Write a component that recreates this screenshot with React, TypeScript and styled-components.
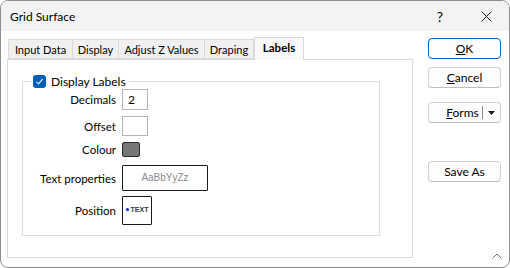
import * as React from 'react'
import styled, { createGlobalStyle } from 'styled-components'

const GlobalStyle = createGlobalStyle`
    html, body {
        margin: 0;
        padding: 0;
        background: #ffffff;
    }
    body {
        font-family: Lato, 'Noto Sans', sans-serif;
        font-size: 11.5px;
        color: #000;
    }
`

const Window = styled.div`
    box-sizing: border-box;
    width: 510px;
    height: 268px;
    border: 1px solid #8e8e8e;
    border-radius: 8px;
    overflow: hidden;
    display: flex;
    flex-direction: column;
    background: #ffffff;
    position: relative;
`

const TitleBar = styled.div`
    height: 30px;
    display: flex;
    align-items: center;
    background: #f3f3f3;
    padding-left: 9px;
    font-size: 12px;
`

const Title = styled.div`
    flex: 1;
`

const TitleButton = styled.div`
    width: 46px;
    height: 30px;
    display: flex;
    align-items: center;
    justify-content: center;
    font-size: 14px;
`

const Body = styled.div`
    flex: 1;
    display: flex;
    padding: 6px 0 0 6px;
`

const Left = styled.div`
    width: 406px;
    display: flex;
    flex-direction: column;
`

const TabStrip = styled.div`
    height: 22px;
    display: flex;
    align-items: flex-end;
    padding-left: 1px;
    position: relative;
    z-index: 1;
`

const Tab = styled.div<{ $active?: boolean; $first?: boolean; $w: number }>`
    box-sizing: border-box;
    height: ${p => (p.$active ? '23px' : '20px')};
    width: ${p => p.$w}px;
    border: 1px solid #d9d9d9;
    border-left: ${p => (p.$first || p.$active ? '1px solid #d9d9d9' : 'none')};
    border-bottom: ${p => (p.$active ? 'none' : '1px solid #d9d9d9')};
    background: ${p => (p.$active ? '#f9f9f9' : '#f0f0f0')};
    font-weight: ${p => (p.$active ? 'bold' : 'normal')};
    font-size: ${p => (p.$active ? '11.5px' : '11px')};
    margin-bottom: ${p => (p.$active ? '-1px' : '0')};
    display: flex;
    align-items: center;
    justify-content: center;
    padding-top: ${p => (p.$active ? '0' : '1px')};
    padding-bottom: ${p => (p.$active ? '3px' : '0')};
    white-space: nowrap;
`

const Panel = styled.div`
    box-sizing: border-box;
    height: 199px;
    border: 1px solid #d9d9d9;
    background: #ffffff;
    padding: 14px 0 0 14px;
`

const Group = styled.fieldset`
    box-sizing: border-box;
    width: 358px;
    height: 162px;
    margin: 0;
    border: 1px solid #dcdcdc;
    padding: 0;
`

const Legend = styled.legend`
    margin-left: 8px;
    padding: 0 3px 0 2px;
    display: flex;
    align-items: center;
    gap: 5px;
    font-size: 12px;
`

const Check = styled.span`
    width: 13px;
    height: 13px;
    border-radius: 3px;
    background: #005fb8;
    display: flex;
    align-items: center;
    justify-content: center;
`

const Rows = styled.div`
    display: flex;
    flex-direction: column;
`

const Row = styled.div<{ $gap: number; $h: number }>`
    display: flex;
    align-items: center;
    height: ${p => p.$h}px;
    margin-top: ${p => p.$gap}px;
    gap: 6px;
`

const Label = styled.div`
    width: 93px;
    text-align: right;
`

const InputBox = styled.div<{ $w: number }>`
    box-sizing: border-box;
    width: ${p => p.$w}px;
    height: 100%;
    border: 1px solid #b4b4b4;
    padding-left: 5px;
    display: flex;
    align-items: center;
    font-size: 12px;
`

const Swatch = styled.div`
    box-sizing: border-box;
    width: 18px;
    height: 15px;
    border: 1px solid #2b2b2b;
    border-radius: 2px;
    background: #777777;
`

const PreviewBox = styled.div<{ $w: number }>`
    box-sizing: border-box;
    width: ${p => p.$w}px;
    height: 100%;
    border: 1px solid #1a1a1a;
    border-radius: 1px;
    display: flex;
    align-items: center;
    justify-content: center;
`

const SampleText = styled.span`
    font-family: 'Liberation Sans', Arial, sans-serif;
    font-size: 10px;
    color: #8a8a8a;
    margin-top: -2px;
`

const PositionText = styled.span`
    font-family: 'Liberation Sans', Arial, sans-serif;
    font-size: 7px;
    font-weight: bold;
    color: #333;
    display: flex;
    align-items: center;
    gap: 2px;
    margin-top: -3px;
`

const Dot = styled.span`
    width: 3px;
    height: 3px;
    border-radius: 50%;
    background: #1a1ae0;
`

const Right = styled.div`
    display: flex;
    flex-direction: column;
    margin-left: 15px;
    padding-top: 1px;
`

const Button = styled.div<{ $primary?: boolean; $gap?: number }>`
    box-sizing: border-box;
    width: 73px;
    height: 21px;
    margin-top: ${p => p.$gap ?? 0}px;
    border: 1px solid ${p => (p.$primary ? '#005fb8' : '#d0d0d0')};
    border-bottom-color: ${p => (p.$primary ? '#005fb8' : '#bdbdbd')};
    border-radius: 4px;
    background: #fdfdfd;
    display: flex;
    align-items: center;
    justify-content: center;
    font-size: 12px;
`

const SplitLabel = styled.span`
    flex: 1;
    text-align: center;
    padding-left: 14px;
`

const SplitPart = styled.span`
    width: 17px;
    height: 13px;
    border-left: 1px solid #8a8a8a;
    display: flex;
    align-items: center;
    justify-content: center;
`

const Grip = styled.div`
    position: absolute;
    right: 7px;
    bottom: 8px;
    line-height: 0;
`

const Tabs = [
    { name: 'Input Data', w: 65 },
    { name: 'Display', w: 46 },
    { name: 'Adjust Z Values', w: 86 },
    { name: 'Draping', w: 49 },
    { name: 'Labels', w: 50, active: true }
]

const App: React.FunctionComponent = (): JSX.Element => {
    return (
        <>
            <GlobalStyle />
            <Window>
                <TitleBar>
                    <Title>Grid Surface</Title>
                    <TitleButton>?</TitleButton>
                    <TitleButton>
                        <svg width="11" height="11" viewBox="0 0 11 11">
                            <path d="M0.5 0.5 L10.5 10.5 M10.5 0.5 L0.5 10.5" stroke="#1a1a1a" strokeWidth="1" />
                        </svg>
                    </TitleButton>
                </TitleBar>
                <Body>
                    <Left>
                        <TabStrip>
                            {Tabs.map((t, i) => (
                                <Tab key={t.name} $w={t.w} $active={t.active} $first={i === 0}>
                                    {t.name}
                                </Tab>
                            ))}
                        </TabStrip>
                        <Panel>
                            <Group>
                                <Legend>
                                    <Check>
                                        <svg width="9" height="9" viewBox="0 0 9 9">
                                            <path d="M1.5 4.8 L3.6 6.8 L7.6 2.2" fill="none" stroke="#fff" strokeWidth="1.1" />
                                        </svg>
                                    </Check>
                                    Display Labels
                                </Legend>
                                <Rows>
                                    <Row $gap={0} $h={21}>
                                        <Label>Decimals</Label>
                                        <InputBox $w={26}>2</InputBox>
                                    </Row>
                                    <Row $gap={6} $h={20}>
                                        <Label>Offset</Label>
                                        <InputBox $w={26} />
                                    </Row>
                                    <Row $gap={6} $h={15}>
                                        <Label>Colour</Label>
                                        <Swatch />
                                    </Row>
                                    <Row $gap={8} $h={26}>
                                        <Label>Text properties</Label>
                                        <PreviewBox $w={86}>
                                            <SampleText>AaBbYyZz</SampleText>
                                        </PreviewBox>
                                    </Row>
                                    <Row $gap={5} $h={29}>
                                        <Label>Position</Label>
                                        <PreviewBox $w={30}>
                                            <PositionText>
                                                <Dot />
                                                TEXT
                                            </PositionText>
                                        </PreviewBox>
                                    </Row>
                                </Rows>
                            </Group>
                        </Panel>
                    </Left>
                    <Right>
                        <Button $primary>
                            <span><u>O</u>K</span>
                        </Button>
                        <Button $gap={8}>
                            <span><u>C</u>ancel</span>
                        </Button>
                        <Button $gap={14}>
                            <SplitLabel><u>F</u>orms</SplitLabel>
                            <SplitPart>
                                <svg width="7" height="4" viewBox="0 0 7 4">
                                    <path d="M0 0 L7 0 L3.5 4 Z" fill="#1a1a1a" />
                                </svg>
                            </SplitPart>
                        </Button>
                        <Button $gap={38}>Save As</Button>
                    </Right>
                </Body>
                <Grip>
                    <svg width="10" height="6" viewBox="0 0 10 6">
                        <path d="M0.5 5.5 L5 1 L9.5 5.5" fill="none" stroke="#707070" strokeWidth="1" />
                    </svg>
                </Grip>
            </Window>
        </>
    )
}

export default App
